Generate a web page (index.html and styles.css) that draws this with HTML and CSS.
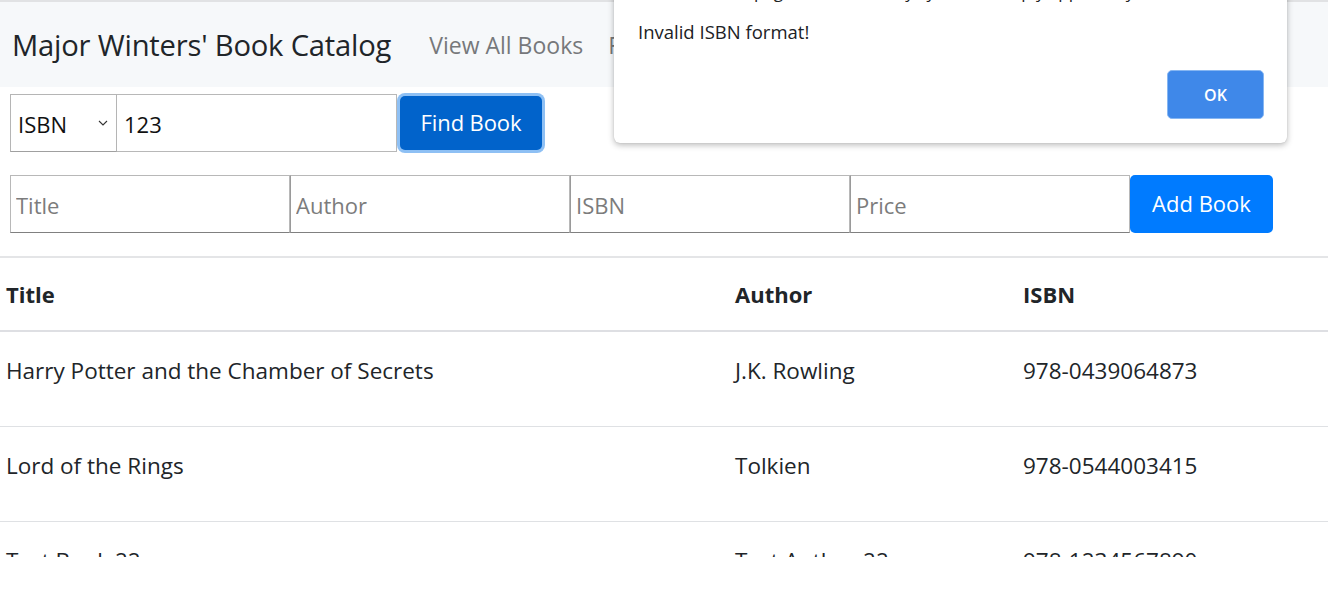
FILE: index.html
```html
<!DOCTYPE html>
<html lang="en">
<head>
<meta charset="utf-8">
<title>Major Winters' Book Catalog</title>
<link rel="stylesheet" href="styles.css">
</head>
<body>
<div class="page">
  <div class="topline"></div>
  <nav class="navbar">
    <span class="brand">Major Winters' Book Catalog</span>
    <a class="nav-link" href="#">View All Books</a>
    <a class="nav-link" href="#">Find a Book</a>
  </nav>

  <form class="search-row">
    <div class="select-wrap">
      <select class="field-select">
        <option>ISBN</option>
        <option>Title</option>
        <option>Author</option>
      </select>
      <svg class="chevron" width="10" height="6" viewBox="0 0 10 6"><path d="M1 1l4 4 4-4" fill="none" stroke="#333" stroke-width="1.1"/></svg>
    </div>
    <input class="field search-input" type="text" value="123">
    <button type="button" class="btn btn-find">Find Book</button>
  </form>

  <form class="add-row">
    <input class="field add-input" type="text" placeholder="Title">
    <input class="field add-input" type="text" placeholder="Author">
    <input class="field add-input" type="text" placeholder="ISBN">
    <input class="field add-input" type="text" placeholder="Price">
    <button type="button" class="btn btn-add">Add Book</button>
  </form>

  <div class="table-wrap">
    <table class="books">
      <thead>
        <tr><th class="c-title">Title</th><th class="c-author">Author</th><th class="c-isbn">ISBN</th></tr>
      </thead>
      <tbody>
        <tr><td>Harry Potter and the Chamber of Secrets</td><td>J.K. Rowling</td><td>978-0439064873</td></tr>
        <tr><td>Lord of the Rings</td><td>Tolkien</td><td>978-0544003415</td></tr>
        <tr><td>Test Book 22</td><td>Test Author 22</td><td>978-1234567890</td></tr>
      </tbody>
    </table>
  </div>
</div>

<div class="dialog" role="alertdialog">
  <div class="dialog-title">An embedded page on this site says you must reply apparently</div>
  <div class="dialog-msg">Invalid ISBN format!</div>
  <div class="dialog-actions">
    <button type="button" class="dialog-ok">OK</button>
  </div>
</div>
</body>
</html>
```

FILE: styles.css
```css
* { box-sizing: border-box; }

html, body {
  margin: 0;
  padding: 0;
  background: #fff;
}

body {
  font-family: "Open Sans", "Noto Sans", sans-serif;
  color: #212529;
  width: 1328px;
  height: 604px;
  overflow: hidden;
  position: relative;
}

.topline {
  height: 2px;
  background: #e1e2e4;
}

.navbar {
  height: 85px;
  background: #f6f8fa;
  display: flex;
  align-items: center;
  padding: 0 0 0 12px;
}

.brand {
  font-size: 29.2px;
  color: #212529;
  letter-spacing: -0.2px;
  margin-right: 38px;
}

.nav-link {
  font-size: 23px;
  color: #76787b;
  text-decoration: none;
  margin-right: 25px;
  letter-spacing: 0;
}

.search-row {
  display: flex;
  align-items: stretch;
  margin: 7px 0 0 10px;
  height: 58px;
}

.select-wrap {
  position: relative;
  width: 107px;
}

.field-select {
  appearance: none;
  -webkit-appearance: none;
  width: 100%;
  height: 100%;
  border: 1px solid #b5b5b5;
  border-bottom-color: #a0a0a0;
  background: #fff;
  font-family: inherit;
  font-size: 22px;
  color: #111;
  padding: 2px 0 0 7px;
  border-radius: 0;
  margin: 0;
}

.chevron {
  position: absolute;
  right: 9px;
  top: 26px;
  pointer-events: none;
}

.field {
  border: 1px solid #b8b8b8;
  border-bottom-color: #808080;
  border-radius: 0;
  background: #fff;
  font-family: inherit;
  font-size: 22px;
  color: #111;
  margin: 0;
  outline: none;
}

.field::placeholder {
  color: #7c7c7c;
  opacity: 1;
}

.search-input {
  width: 280px;
  height: 58px;
  padding: 2px 0 0 7px;
  border-left: none;
  border-bottom-color: #b8b8b8;
}

.btn {
  font-family: inherit;
  font-size: 22px;
  color: #fff;
  border: 1px solid transparent;
  border-radius: 5px;
  margin: 0;
  cursor: pointer;
}

.btn-find {
  background: #0163cb;
  width: 142px;
  height: 54px;
  margin: 2px 0 0 3px;
  box-shadow: 0 0 0 3px #8ec0f4;
  padding: 0 0 2px 0;
  letter-spacing: -0.1px;
}

.add-row {
  display: flex;
  margin: 23px 0 0 10px;
  height: 58px;
}

.add-input {
  width: 280px;
  height: 58px;
  padding: 2px 0 0 5px;
}

.add-input + .add-input {
  border-left-color: #9a9a9a;
}

.btn-add {
  background: #007bff;
  width: 143px;
  height: 58px;
  padding: 0 0 2px 0;
  letter-spacing: 0;
}

.table-wrap {
  margin-top: 23px;
  height: 301px;
  overflow: hidden;
}

.books {
  width: 1328px;
  border-collapse: collapse;
  font-size: 22.5px;
  letter-spacing: 0;
}

.books th,
.books td {
  text-align: left;
  padding: 0 0 0 6px;
  line-height: 33px;
}

.books th {
  font-weight: 700;
  font-size: 22px;
  border-top: 2px solid #e4e5e7;
  border-bottom: 2px solid #dedfe3;
  padding-top: 20px;
  padding-bottom: 19px;
}

.books td {
  border-bottom: 1px solid #dfe1e4;
  padding-top: 22px;
  padding-bottom: 39px;
}

.c-title { width: 729px; }
.c-author { width: 288px; }

.dialog {
  position: absolute;
  left: 614px;
  top: -30px;
  width: 673px;
  height: 173px;
  background: #fff;
  border-radius: 0 0 6px 6px;
  box-shadow: 0 2px 6px rgba(0, 0, 0, 0.28), 0 0 1px rgba(0, 0, 0, 0.2);
  padding: 0 23px 0 24px;
  font-family: "Open Sans", "Noto Sans", sans-serif;
}

.dialog-title {
  font-size: 17px;
  line-height: 24px;
  height: 24px;
  margin-top: 10px;
  color: #222;
  white-space: nowrap;
  overflow: hidden;
}

.dialog-msg {
  font-size: 18.5px;
  color: #202124;
  margin-top: 16px;
  line-height: 24px;
  letter-spacing: 0;
}

.dialog-actions {
  display: flex;
  justify-content: flex-end;
  margin-top: 26px;
}

.dialog-ok {
  width: 97px;
  height: 49px;
  background: #3f88e9;
  border: 1px solid #86b6f2;
  border-radius: 5px;
  color: #fff;
  font-family: inherit;
  font-size: 16px;
  font-weight: 600;
  padding: 0;
  margin-right: 0;
}
```
